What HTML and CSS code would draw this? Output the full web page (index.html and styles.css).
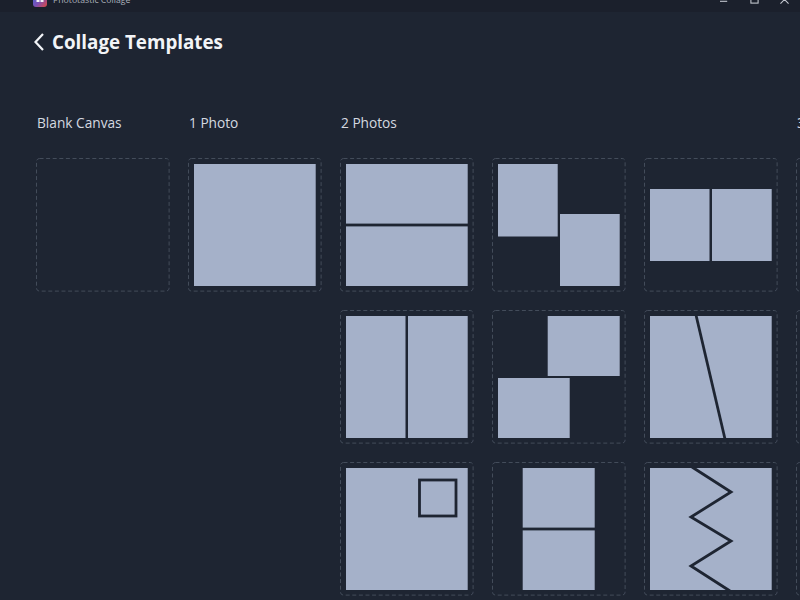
FILE: index.html
```html
<!DOCTYPE html>
<html lang="en">
<head>
<meta charset="utf-8">
<title>Phototastic Collage</title>
<link rel="stylesheet" href="styles.css">
</head>
<body>
<div class="titlebar">
  <div class="app">
    <svg class="logo" viewBox="0 0 14 16"><defs><linearGradient id="lg" x1="0" y1="0" x2="1" y2="1"><stop offset="0" stop-color="#3a6fd8"/><stop offset="0.55" stop-color="#7a4fb8"/><stop offset="1" stop-color="#e0483e"/></linearGradient></defs><rect width="14" height="16" rx="3" fill="url(#lg)"/><rect x="3.5" y="5" width="3" height="6" fill="#f2f2f6"/><rect x="7.5" y="5" width="3" height="6" fill="#f2f2f6"/></svg>
    <span class="app-name">Phototastic Collage</span>
  </div>
  <div class="controls">
    <svg class="ctl" viewBox="0 0 10 10"><path d="M0 7H8" /></svg>
    <svg class="ctl" viewBox="0 0 10 10"><rect x="1" y="1" width="8" height="8" /></svg>
    <svg class="ctl" viewBox="0 0 10 10"><path d="M0.5 0.5L9.5 9.5M9.5 0.5L0.5 9.5" /></svg>
  </div>
</div>
<header class="head">
  <svg class="back" viewBox="0 0 10 18"><path d="M9 1L1.5 9L9 17" /></svg>
  <h1 class="title">Collage Templates</h1>
</header>
<main class="groups">
  <section class="group">
    <h2 class="label">Blank Canvas</h2>
    <div class="tiles one">
      <svg class="tile" viewBox="0 0 134 134"><rect class="frame" x=".5" y=".5" width="132.6" height="132.6" rx="3"/></svg>
    </div>
  </section>
  <section class="group">
    <h2 class="label">1 Photo</h2>
    <div class="tiles one">
      <svg class="tile" viewBox="0 0 134 134"><rect class="frame" x=".5" y=".5" width="132.6" height="132.6" rx="3"/><rect class="ph" x="6" y="6" width="121.7" height="122"/></svg>
    </div>
  </section>
  <section class="group">
    <h2 class="label">2 Photos</h2>
    <div class="tiles three">
      <svg class="tile" viewBox="0 0 134 134"><rect class="frame" x=".5" y=".5" width="132.6" height="132.6" rx="3"/><rect class="ph" x="6" y="6" width="121.7" height="59.6"/><rect class="ph" x="6" y="68.4" width="121.7" height="59.6"/></svg>
      <svg class="tile" viewBox="0 0 134 134"><rect class="frame" x=".5" y=".5" width="132.6" height="132.6" rx="3"/><rect class="ph" x="6" y="6" width="59.7" height="72.5"/><rect class="ph" x="68" y="56" width="59.7" height="72"/></svg>
      <svg class="tile" viewBox="0 0 134 134"><rect class="frame" x=".5" y=".5" width="132.6" height="132.6" rx="3"/><rect class="ph" x="6" y="31" width="59.5" height="72"/><rect class="ph" x="68" y="31" width="59.7" height="72"/></svg>
      <svg class="tile" viewBox="0 0 134 134"><rect class="frame" x=".5" y=".5" width="132.6" height="132.6" rx="3"/><rect class="ph" x="6" y="6" width="59.5" height="122"/><rect class="ph" x="68" y="6" width="59.7" height="122"/></svg>
      <svg class="tile" viewBox="0 0 134 134"><rect class="frame" x=".5" y=".5" width="132.6" height="132.6" rx="3"/><rect class="ph" x="55.7" y="6" width="72" height="60"/><rect class="ph" x="6" y="68" width="71.7" height="60"/></svg>
      <svg class="tile" viewBox="0 0 134 134"><rect class="frame" x=".5" y=".5" width="132.6" height="132.6" rx="3"/><rect class="ph" x="6" y="6" width="121.7" height="122"/><path class="cut" d="M52 5L81 129"/></svg>
      <svg class="tile" viewBox="0 0 134 134"><rect class="frame" x=".5" y=".5" width="132.6" height="132.6" rx="3"/><rect class="ph" x="6" y="6" width="121.7" height="122"/><rect class="cut" x="79.5" y="18" width="36.5" height="36"/></svg>
      <svg class="tile" viewBox="0 0 134 134"><rect class="frame" x=".5" y=".5" width="132.6" height="132.6" rx="3"/><rect class="ph" x="30.7" y="6" width="72" height="59.6"/><rect class="ph" x="30.7" y="68.4" width="72" height="59.6"/></svg>
      <svg class="tile" viewBox="0 0 134 134"><rect class="frame" x=".5" y=".5" width="132.6" height="132.6" rx="3"/><rect class="ph" x="6" y="6" width="121.7" height="122"/><path class="cut" d="M48 5L87 30L47 55L87 79L47 104L86 129"/></svg>
    </div>
  </section>
  <section class="group">
    <h2 class="label">3 Photos</h2>
    <div class="tiles one">
      <svg class="tile" viewBox="0 0 134 134"><rect class="frame" x=".5" y=".5" width="132.6" height="132.6" rx="3"/></svg>
      <svg class="tile" viewBox="0 0 134 134"><rect class="frame" x=".5" y=".5" width="132.6" height="132.6" rx="3"/></svg>
      <svg class="tile" viewBox="0 0 134 134"><rect class="frame" x=".5" y=".5" width="132.6" height="132.6" rx="3"/></svg>
    </div>
  </section>
</main>
</body>
</html>
```
FILE: styles.css
```css
* { box-sizing: border-box; }
html, body { margin: 0; height: 100%; overflow: hidden; }
body {
  background: #1e2532;
  color: #e6e9ee;
  font-family: "Open Sans", "Noto Sans", sans-serif;
  width: 800px;
  height: 600px;
}
.titlebar {
  margin-top: -14px;
  height: 26px;
  background: #1b202c;
  display: flex;
  align-items: center;
  justify-content: space-between;
  padding-left: 33px;
}
.app { display: flex; align-items: center; gap: 6px; }
.logo { width: 14px; height: 16px; display: block; }
.app-name { font-size: 8.7px; color: #aab0bb; position: relative; top: 1px; }
.controls { display: flex; align-items: center; gap: 21px; padding-right: 11px; }
.ctl { width: 9px; height: 9px; display: block; fill: none; stroke: #c4c8d0; stroke-width: 1.2; }
.head {
  display: flex;
  align-items: center;
  gap: 8px;
  padding: 14px 0 0 34px;
  height: 46px;
}
.back { width: 10px; height: 18px; fill: none; stroke: #f2f4f7; stroke-width: 2.2; flex: none; }
.title { margin: 0; font-size: 18.8px; font-weight: 700; color: #f2f4f7; line-height: 28px; }
.groups {
  display: flex;
  gap: 18px;
  padding: 55px 0 0 36px;
  width: 900px;
}
.group { flex: none; }
.label {
  margin: 0 0 25px;
  padding-left: 1px;
  font-size: 13.7px;
  font-weight: 400;
  line-height: 20px;
  color: #d5d9e0;
}
.tiles { display: grid; gap: 18px; }
.tiles.one { grid-template-columns: 134px; }
.tiles.three { grid-template-columns: repeat(3, 134px); }
.tile { display: block; width: 134px; height: 134px; }
.frame { fill: none; stroke: #434c5a; stroke-width: 1; stroke-dasharray: 4 2.6; }
.ph { fill: #a5b1c9; }
.cut { fill: none; stroke: #1e2532; stroke-width: 2.8; }
```
